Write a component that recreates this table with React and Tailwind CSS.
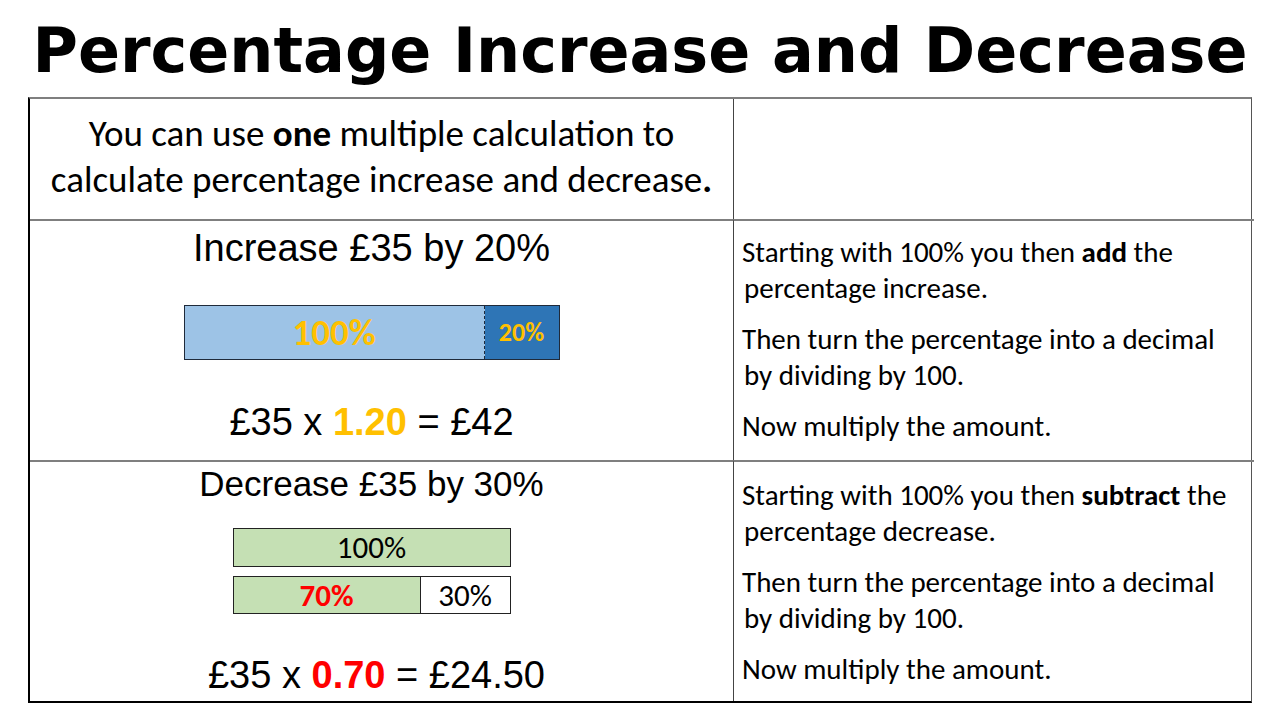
import React from 'react';

const body = "font-['Carlito','Lato',sans-serif]";
const arial = "font-['Liberation_Sans',Arial,sans-serif]";

const Steps = ({ verb, top }) => (
  <div className={`${body} ${top} text-[29px] leading-[36px] text-black pl-[8px] flex flex-col gap-[15px]`}>
    <p>
      Starting with 100% you then <b>{verb}</b> the
      <br />
      <span className="pl-[2px]">percentage {verb === 'add' ? 'increase' : 'decrease'}.</span>
    </p>
    <p>
      Then turn the percentage into a decimal
      <br />
      <span className="pl-[2px]">by dividing by 100.</span>
    </p>
    <p>Now multiply the amount.</p>
  </div>
);

const App = () => {
  return (
    <div className="w-[1280px] h-[720px] bg-white overflow-hidden">
      <h1 className="h-[97px] flex items-center justify-center pt-[4px] font-['Comic_Sans_MS','DejaVu_Sans',sans-serif] font-bold text-[62px] text-black">
        Percentage Increase and Decrease
      </h1>
      <div className="ml-[28px] w-[1224px] grid grid-cols-[704px_520px] grid-rows-[120px_241px_241px] border-t-2 border-t-[#7f7f7f] border-l-2 border-l-black border-b-2 border-b-black border-r border-r-[#555]">
        {/* row 1 */}
        <div className={`${body} border-r border-r-[#444] flex flex-col items-center justify-center text-[37px] leading-[46px] text-black pb-[4px]`}>
          <p>You can use <b>one</b> multiple calculation to</p>
          <p>calculate percentage increase and decrease<b>.</b></p>
        </div>
        <div />

        {/* row 2 */}
        <div className="border-t-2 border-t-[#7f7f7f] border-r border-r-[#444] flex flex-col items-center pr-[20px]">
          <p className={`${arial} text-[38px] leading-[44px] mt-[5px] text-black`}>Increase £35 by 20%</p>
          <div className="mt-[35px] w-[376px] h-[55px] border border-[#1f2a3a] flex">
            <div className={`${body} w-[300px] bg-[#9dc3e6] flex items-center justify-center font-bold text-[37px] text-[#ffc000] border-r border-dashed border-r-[#1f2a3a]`}>
              100%
            </div>
            <div className={`${body} flex-1 bg-[#2e75b6] flex items-center justify-center font-bold text-[26px] text-[#ffc000]`}>
              20%
            </div>
          </div>
          <p className={`${arial} text-[38px] leading-[44px] mt-[40px] text-black`}>
            £35 x <span className="text-[#ffc000] font-bold">1.20</span> = £42
          </p>
        </div>
        <div className="border-t-2 border-t-[#7f7f7f]">
          <Steps verb="add" top="pt-[13px]" />
        </div>

        {/* row 3 */}
        <div className="border-t-2 border-t-[#7f7f7f] border-r border-r-[#444] flex flex-col items-center pr-[20px]">
          <p className={`${arial} text-[35px] leading-[40px] mt-[2px] text-black`}>Decrease £35 by 30%</p>
          <div className="mt-[24px] w-[278px] flex flex-col gap-[9px]">
            <div className={`${body} h-[39px] bg-[#c5e0b4] border border-[#222] flex items-center justify-center text-[31px] text-black`}>
              100%
            </div>
            <div className={`${body} h-[38px] border border-[#222] flex`}>
              <div className="w-[187px] bg-[#c5e0b4] border-r border-r-[#222] flex items-center justify-center font-bold text-[31px] text-[#ff0000]">
                70%
              </div>
              <div className="flex-1 bg-white flex items-center justify-center text-[31px] text-black">30%</div>
            </div>
          </div>
          <p className={`${arial} text-[38px] leading-[44px] mt-[39px] pl-[10px] text-black`}>
            £35 x <span className="text-[#ff0000] font-bold">0.70</span> = £24.50
          </p>
        </div>
        <div className="border-t-2 border-t-[#7f7f7f]">
          <Steps verb="subtract" top="pt-[15px]" />
        </div>
      </div>
    </div>
  );
};

export default App;
